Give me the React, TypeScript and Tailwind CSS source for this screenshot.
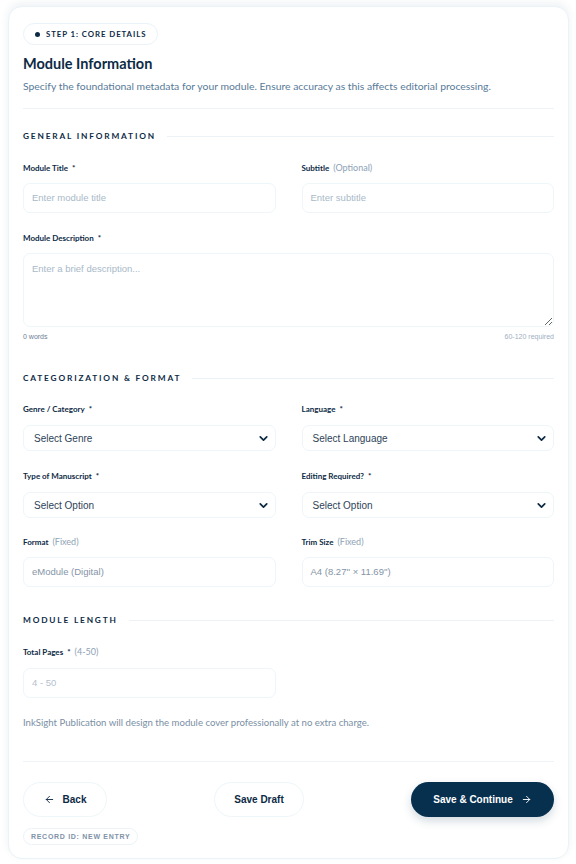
import React from "react";
import { ArrowLeft, ArrowRight, ChevronDown } from "lucide-react";

const head = { fontFamily: "Lato, 'Noto Sans', sans-serif" };
const body = { fontFamily: "'Liberation Sans', Arial, sans-serif" };

function Label({ text, extra, req = true }: { text: string; extra?: string; req?: boolean }) {
  return (
    <div className="h-[12px] flex items-center text-[8px] leading-[12px]" style={head}>
      <span className="font-bold text-[#0d2a45]">{text}</span>
      {req && <span className="ml-[4px] font-bold text-[#0d2a45]">*</span>}
      {extra && <span className="ml-[4px] text-[9px] text-[#8ea2b5]">{extra}</span>}
    </div>
  );
}

function Input({ placeholder, value }: { placeholder?: string; value?: string }) {
  return (
    <div
      className="mt-[9px] h-[30px] rounded-[7px] border border-[#eef6fa] bg-white px-[8px] flex items-center text-[9.5px]"
      style={body}
    >
      {value ? (
        <span className="text-[#8594a6]">{value}</span>
      ) : (
        <span className="text-[#a9b9c8]">{placeholder}</span>
      )}
    </div>
  );
}

function Select({ text }: { text: string }) {
  return (
    <div
      className="mt-[10px] h-[26px] rounded-[7px] border border-[#eef6fa] bg-white pl-[10px] pr-[5px] flex items-center justify-between text-[10px]"
      style={body}
    >
      <span className="text-[#2e4358]">{text}</span>
      <ChevronDown size={13} strokeWidth={3.2} className="text-[#0d2a45]" />
    </div>
  );
}

function Section({ title, className }: { title: string; className?: string }) {
  return (
    <div className={"flex items-center gap-[11px] h-[12px] " + (className || "")}>
      <span className="text-[8.3px] font-bold tracking-[0.22em] text-[#0d2a45]" style={head}>
        {title}
      </span>
      <div className="flex-1 h-px bg-[#edf2f6]" />
    </div>
  );
}

export default function App() {
  return (
    <div className="w-[576px] h-[864px] bg-white overflow-hidden pt-[6px]">
      <div className="ml-[8px] w-[561px] h-[853px] rounded-[14px] border border-[#e9f3f8] bg-white px-[14px] pt-[16px] shadow-[0_-3px_8px_rgba(30,60,100,0.07)]">
        {/* badge */}
        <div className="flex w-fit h-[22px] items-center rounded-full border border-[#ebf3f8] px-[11px] gap-[6px]">
          <span className="w-[5px] h-[5px] rounded-full bg-[#0d2a45]" />
          <span className="text-[7.8px] leading-[10px] font-bold tracking-[0.12em] text-[#0d2a45]" style={head}>
            STEP 1: CORE DETAILS
          </span>
        </div>
        <div className="mt-[10px] h-[18px] text-[14.5px] leading-[18px] font-bold text-[#0d2a45]" style={head}>
          Module Information
        </div>
        <div className="mt-[6px] h-[14px] text-[10.4px] leading-[14px] text-[#587a98]" style={head}>
          Specify the foundational metadata for your module. Ensure accuracy as this affects editorial processing.
        </div>
        <div className="mt-[15px] h-px bg-[#edf3f7]" />

        <Section title="GENERAL INFORMATION" className="mt-[21px]" />

        <div className="mt-[20px] grid grid-cols-2 gap-x-[26px]">
          <div>
            <Label text="Module Title" />
            <Input placeholder="Enter module title" />
          </div>
          <div>
            <Label text="Subtitle" req={false} extra="(Optional)" />
            <Input placeholder="Enter subtitle" />
          </div>
        </div>

        <div className="mt-[19px]">
          <Label text="Module Description" />
          <textarea
            placeholder="Enter a brief description..."
            className="mt-[9px] block w-full h-[74px] rounded-[7px] border border-[#eef6fa] bg-white px-[8px] py-[8px] text-[9.5px] outline-none resize-y placeholder:text-[#a9b9c8]"
            style={body}
          />
          <div className="mt-[5px] h-[10px] flex justify-between text-[7px] leading-[10px]" style={body}>
            <span className="text-[#6c8095]">0 words</span>
            <span className="text-[#a0b0bf]">60-120 required</span>
          </div>
        </div>

        <Section title="CATEGORIZATION & FORMAT" className="mt-[30px]" />

        <div className="mt-[19px] grid grid-cols-2 gap-x-[26px]">
          <div>
            <Label text="Genre / Category" />
            <Select text="Select Genre" />
          </div>
          <div>
            <Label text="Language" />
            <Select text="Select Language" />
          </div>
        </div>

        <div className="mt-[19px] grid grid-cols-2 gap-x-[26px]">
          <div>
            <Label text="Type of Manuscript" />
            <Select text="Select Option" />
          </div>
          <div>
            <Label text="Editing Required?" />
            <Select text="Select Option" />
          </div>
        </div>

        <div className="mt-[18px] grid grid-cols-2 gap-x-[26px]">
          <div>
            <Label text="Format" req={false} extra="(Fixed)" />
            <Input value="eModule (Digital)" />
          </div>
          <div>
            <Label text="Trim Size" req={false} extra="(Fixed)" />
            <Input value={"A4 (8.27'' × 11.69'')"} />
          </div>
        </div>

        <Section title="MODULE LENGTH" className="mt-[27px]" />

        <div className="mt-[20px] grid grid-cols-2 gap-x-[26px]">
          <div>
            <Label text="Total Pages" extra="(4-50)" />
            <div className="mt-[10px] h-[30px] rounded-[7px] border border-[#eef6fa] bg-white px-[8px] flex items-center text-[9.5px]" style={body}>
              <span className="text-[#b3c1ce]">4 - 50</span>
            </div>
          </div>
        </div>

        <div className="mt-[19px] h-[12px] text-[9.6px] leading-[12px] text-[#7a8fa4]" style={head}>
          InkSight Publication will design the module cover professionally at no extra charge.
        </div>

        <div className="mt-[32px] h-px bg-[#edf3f7]" />

        <div className="mt-[20px] flex items-center justify-between" style={body}>
          <div className="h-[35px] w-[84px] rounded-full border border-[#eef6fa] flex items-center justify-center gap-[8px] text-[10px] font-bold text-[#0d2a45]">
            <ArrowLeft size={11} strokeWidth={2} />
            <span>Back</span>
          </div>
          <div className="h-[35px] w-[90px] rounded-full border border-[#eef6fa] flex items-center justify-center text-[10px] font-bold text-[#0d2a45]">
            Save Draft
          </div>
          <div className="h-[35px] w-[143px] rounded-full bg-[#07304f] flex items-center justify-center gap-[8px] text-[10px] font-bold text-white shadow-[0_4px_10px_rgba(7,48,79,0.18)]">
            <span>Save &amp; Continue</span>
            <ArrowRight size={11} strokeWidth={2} />
          </div>
        </div>

        <div className="mt-[11px] flex w-fit h-[17px] items-center rounded-full border border-[#ebf3f8] px-[7px]">
          <span className="text-[7px] leading-[10px] font-bold tracking-[0.1em] text-[#7f93a8]" style={body}>
            RECORD ID: NEW ENTRY
          </span>
        </div>
      </div>
    </div>
  );
}
